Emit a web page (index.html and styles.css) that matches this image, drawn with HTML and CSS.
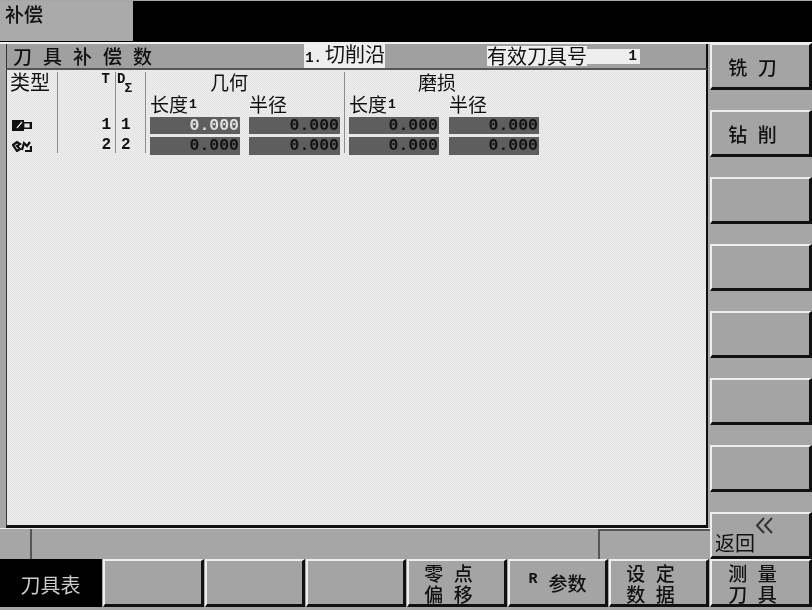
FILE: index.html
```html
<!DOCTYPE html>
<html lang="zh-CN">
<head>
    <meta charset="UTF-8">
    <meta name="viewport" content="width=device-width, initial-scale=1.0">
    <title>补偿</title>
    <link rel="stylesheet" href="styles.css">
</head>
<body>
    <div class="screen">
        <div class="top-bar">
            <div class="top-tab">补偿</div>
        </div>

        <div class="middle">
            <div class="panel">
                <div class="title-bar">
                    <div class="title">刀具补偿数</div>
                    <div class="edge"><b>1.</b>切削沿</div>
                    <div class="active-label">有效刀具号</div>
                    <div class="active-value">1</div>
                </div>

                <div class="tool-table">
                    <div class="col-type">类型</div>
                    <div class="col-t">T</div>
                    <div class="col-d">D<sub>Σ</sub></div>
                    <div class="group geo">几何</div>
                    <div class="group wear">磨损</div>
                    <div class="sub s1">长度<b>1</b></div>
                    <div class="sub s2">半径</div>
                    <div class="sub s3">长度<b>1</b></div>
                    <div class="sub s4">半径</div>

                    <div class="line l1"></div>
                    <div class="line l2"></div>
                    <div class="line l3"></div>
                    <div class="line l4"></div>

                    <svg class="tool-icon i1" width="20" height="11" viewBox="0 0 20 11">
                        <path d="M0 0h12v2h8v7h-8v2H0z" fill="#111"/>
                        <path d="M5 8l5-6M13 4h4v3h-4z" fill="#e8e8e8" stroke="#e8e8e8" stroke-width="1.2"/>
                    </svg>
                    <svg class="tool-icon i2" width="20" height="12" viewBox="0 0 20 12">
                        <path d="M1 5l4-3 3 2-3 2 3 3-3 2zM10 10l2-7 3 3 3-4M13 11h6V6" fill="none" stroke="#111" stroke-width="2.2"/>
                    </svg>

                    <div class="num n-t1">1</div>
                    <div class="num n-d1">1</div>
                    <div class="num n-t2">2</div>
                    <div class="num n-d2">2</div>

                    <div class="val v11 cursor">0.000</div>
                    <div class="val v12">0.000</div>
                    <div class="val v13">0.000</div>
                    <div class="val v14">0.000</div>
                    <div class="val v21">0.000</div>
                    <div class="val v22">0.000</div>
                    <div class="val v23">0.000</div>
                    <div class="val v24">0.000</div>
                </div>
            </div>

            <div class="side-keys">
                <div class="key off-center">铣 刀</div>
                <div class="key off-center">钻 削</div>
                <div class="key"></div>
                <div class="key"></div>
                <div class="key"></div>
                <div class="key"></div>
                <div class="key"></div>
                <div class="key back">
                    <svg width="18" height="17" viewBox="0 0 18 17">
                        <path d="M9 1L2 8.500l7 7.500M17 1l-7 7.500 7 7.500" fill="none" stroke="#333" stroke-width="2"/>
                    </svg>
                    <span>返回</span>
                </div>
            </div>
        </div>

        <div class="status-row">
            <div class="status-a"></div>
            <div class="status-b"></div>
            <div class="status-c"></div>
        </div>

        <div class="bottom-keys">
            <div class="key active">刀具表</div>
            <div class="key"></div>
            <div class="key"></div>
            <div class="key"></div>
            <div class="key off-center two-line"><span>零 点</span><span>偏 移</span></div>
            <div class="key r-key"><b>R</b>参数</div>
            <div class="key off-center two-line"><span>设 定</span><span>数 据</span></div>
            <div class="key off-center two-line"><span>测 量</span><span>刀 具</span></div>
        </div>
    </div>
</body>
</html>
```

FILE: styles.css
```css
* {
    box-sizing: border-box;
}
body {
    margin: 0;
    padding: 0;
    background-color: #a6a6a6;
    font-family: "Noto Sans CJK SC", "Liberation Sans", sans-serif;
    color: #111;
}
.screen {
    width: 812px;
    height: 610px;
    overflow: hidden;
    display: flex;
    flex-direction: column;
    filter: blur(0.4px);
    background-color: #a6a6a6;
}

/* top */
.top-bar {
    height: 41px;
    flex: none;
    margin-top: 1px;
    background-color: #000;
}
.top-tab {
    width: 133px;
    height: 40px;
    padding-left: 5px;
    background-color: #aaa;
    font-size: 19px;
    font-weight: 500;
    line-height: 26px;
}

/* middle */
.middle {
    height: 486px;
    flex: none;
    display: flex;
    border-top: 2px solid #eee;
}
.panel {
    width: 708px;
    flex: none;
    padding-left: 6px;
    display: flex;
    flex-direction: column;
}
.title-bar {
    height: 26px;
    flex: none;
    display: flex;
    align-items: center;
    background-color: #a0a0a0;
    border-left: 1px solid #333;
    border-right: 2px solid #111;
    border-bottom: 2px solid #555;
    font-size: 20px;
    line-height: 20px;
}
.title {
    width: 297px;
    padding-left: 6px;
    font-size: 19px;
    font-weight: 500;
    letter-spacing: 11px;
    white-space: nowrap;
}
.edge {
    width: 81px;
    background-color: #eee;
    white-space: nowrap;
    text-align: right;
}
.edge b {
    font-family: "Liberation Mono", monospace;
    font-size: 14px;
    margin-right: 3px;
}
.active-label {
    margin-left: 102px;
    background-color: #eee;
    white-space: nowrap;
}
.active-value {
    width: 53px;
    height: 15px;
    background-color: #eee;
    font-family: "Liberation Mono", monospace;
    font-size: 14px;
    font-weight: bold;
    line-height: 14px;
    text-align: right;
    padding-right: 3px;
}

/* table */
.tool-table {
    flex: 1;
    display: grid;
    grid-template-columns: 3px 42px 5px 1px 57px 1px 29px 1px 4px 90px 9px 91px 4px 1px 4px 90px 10px 90px 1fr;
    grid-template-rows: 2px 20px 23px 2px 17px 3px 18px 1fr;
    background-color: #e8e8e8;
    background-image: repeating-conic-gradient(#e2e2e2 0 25%, #eeeeee 0 50%);
    background-size: 2px 2px;
    border-left: 1px solid #333;
    border-right: 2px solid #111;
    border-bottom: 3px solid #111;
    font-size: 19px;
    line-height: 20px;
}
.col-type {
    grid-column: 2 / 4;
    grid-row: 2;
    font-size: 20px;
    white-space: nowrap;
}
.col-t {
    grid-column: 5;
    grid-row: 2;
    text-align: right;
    font-family: "Liberation Mono", monospace;
    font-size: 14px;
    font-weight: bold;
    padding-right: 5px;
    line-height: 14px;
}
.col-d {
    grid-column: 7;
    grid-row: 2 / 4;
    padding-left: 1px;
    font-family: "Liberation Mono", monospace;
    font-size: 14px;
    font-weight: bold;
    line-height: 14px;
}
.col-d sub {
    font-size: 13px;
    vertical-align: -9px;
    line-height: 0;
    margin-left: -1px;
}
.group {
    grid-row: 2;
    white-space: nowrap;
}
.group.geo {
    grid-column: 10 / 13;
    padding-left: 60px;
}
.group.wear {
    grid-column: 16 / 19;
    padding-left: 69px;
}
.sub {
    grid-row: 3;
    white-space: nowrap;
    line-height: 23px;
}
.sub b {
    font-family: "Liberation Mono", monospace;
    font-size: 13px;
    vertical-align: 4px;
    line-height: 0;
    margin-left: 1px;
}
.s1 { grid-column: 10; }
.s2 { grid-column: 12; }
.s3 { grid-column: 16; }
.s4 { grid-column: 18; }
.line {
    grid-row: 2 / 9;
    background-color: #8c8c8c;
    height: 81px;
}
.l1 { grid-column: 4; }
.l2 { grid-column: 6; }
.l3 { grid-column: 8; }
.l4 { grid-column: 14; }
.tool-icon {
    grid-column: 2 / 4;
    align-self: center;
    margin-left: 2px;
}
.i1 { grid-row: 5; }
.i2 { grid-row: 7; }
.num {
    font-family: "Liberation Mono", monospace;
    font-size: 16px;
    font-weight: bold;
    line-height: 17px;
}
.n-t1 { grid-column: 5; grid-row: 5; text-align: right; padding-right: 4px; }
.n-t2 { grid-column: 5; grid-row: 7; text-align: right; padding-right: 4px; }
.n-d1 { grid-column: 7; grid-row: 5; padding-left: 5px; }
.n-d2 { grid-column: 7; grid-row: 7; padding-left: 5px; }
.val {
    background-color: #5e5e5e;
    color: #111;
    font-family: "Liberation Mono", monospace;
    font-size: 16.500px;
    font-weight: bold;
    line-height: 17px;
    text-align: right;
    padding-right: 1px;
}
.val.cursor {
    color: #e0e0e0;
}
.v11 { grid-column: 10; grid-row: 5; }
.v12 { grid-column: 12; grid-row: 5; }
.v13 { grid-column: 16; grid-row: 5; }
.v14 { grid-column: 18; grid-row: 5; }
.v21 { grid-column: 10; grid-row: 7; }
.v22 { grid-column: 12; grid-row: 7; }
.v23 { grid-column: 16; grid-row: 7; }
.v24 { grid-column: 18; grid-row: 7; }

/* keys */
.key {
    background-color: #a4a4a4;
    border-top: 2px solid #eee;
    border-left: 2px solid #eee;
    border-right: 3px solid #111;
    border-bottom: 3px solid #111;
    font-size: 19px;
    font-weight: 500;
    display: flex;
    align-items: center;
    justify-content: center;
    text-align: center;
}
.off-center {
    padding-right: 16px;
    word-spacing: 6px;
    line-height: 21px;
}
.two-line {
    flex-direction: column;
}
.two-line span {
    display: block;
    height: 21px;
}
.side-keys {
    width: 102px;
    margin: -1px 0 0 2px;
    flex: none;
    display: flex;
    flex-direction: column;
    gap: 20px;
}
.side-keys .key {
    height: 47px;
    flex: none;
}
.side-keys .back {
    flex-direction: column;
    align-items: flex-start;
    justify-content: flex-start;
    padding: 3px 0 0 3px;
    line-height: 20px;
    position: relative;
    z-index: 1;
}
.back svg {
    align-self: center;
    margin-left: 3px;
}
.back span {
    margin-top: -1px;
    font-size: 20px;
    font-weight: 400;
}

/* status */
.status-row {
    height: 31px;
    flex: none;
    display: flex;
    border-top: 1px solid #eee;
}
.status-a {
    width: 32px;
    border-right: 2px solid #555;
}
.status-b {
    width: 566px;
}
.status-c {
    width: 112px;
    border-left: 2px solid #555;
    border-top: 2px solid #555;
}

.bottom-keys {
    flex: 1;
    display: grid;
    grid-template-columns: 102px 101px 100px 100px 100px 100px 100px 1fr;
    gap: 0 1px;
    padding-bottom: 3px;
}
.key.active {
    background-color: #000;
    border-color: #000;
    color: #ccc;
    font-size: 20px;
    font-weight: 400;
    padding-top: 3px;
}
.r-key {
    white-space: nowrap;
}
.r-key b {
    font-family: "Liberation Mono", monospace;
    font-size: 15px;
    margin: -7px 11px 0 0;
}
```
